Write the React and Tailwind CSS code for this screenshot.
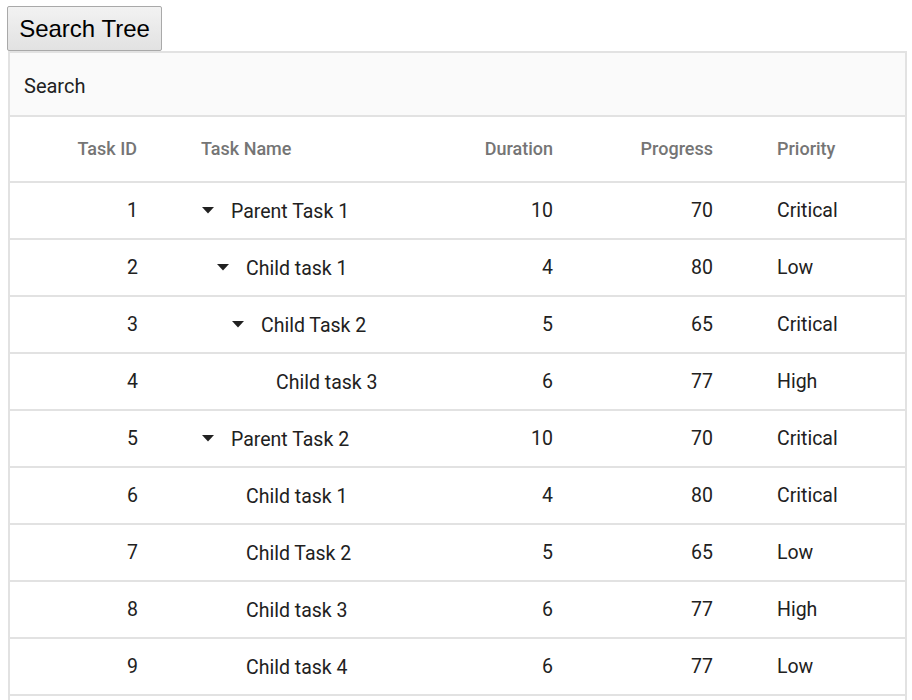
import React from "react";

const rows = [
  { id: 1, name: "Parent Task 1", level: 0, arrow: true, duration: 10, progress: 70, priority: "Critical" },
  { id: 2, name: "Child task 1", level: 1, arrow: true, duration: 4, progress: 80, priority: "Low" },
  { id: 3, name: "Child Task 2", level: 2, arrow: true, duration: 5, progress: 65, priority: "Critical" },
  { id: 4, name: "Child task 3", level: 3, arrow: false, duration: 6, progress: 77, priority: "High" },
  { id: 5, name: "Parent Task 2", level: 0, arrow: true, duration: 10, progress: 70, priority: "Critical" },
  { id: 6, name: "Child task 1", level: 1, arrow: false, duration: 4, progress: 80, priority: "Critical" },
  { id: 7, name: "Child Task 2", level: 1, arrow: false, duration: 5, progress: 65, priority: "Low" },
  { id: 8, name: "Child task 3", level: 1, arrow: false, duration: 6, progress: 77, priority: "High" },
  { id: 9, name: "Child task 4", level: 1, arrow: false, duration: 6, progress: 77, priority: "Low" },
];

const indents = ["w-0", "w-[15px]", "w-[30px]", "w-[45px]"];

function Arrow() {
  return (
    <svg width="12" height="7" viewBox="0 0 12 7" className="mr-[17px] shrink-0">
      <path d="M0 0 L12 0 L6 6.5 Z" fill="#212121" />
    </svg>
  );
}

export default function App() {
  return (
    <div className="bg-white h-[700px] overflow-hidden" style={{ fontFamily: "Roboto, 'Liberation Sans', sans-serif" }}>
      <button
        className="ml-[7px] mt-[6px] h-[45px] w-[155px] border border-[#a9a9a9] rounded-[2px] bg-gradient-to-b from-[#f2f2f2] to-[#e2e2e2] text-[24px] text-black leading-none flex items-center justify-center"
        style={{ fontFamily: "'Liberation Sans', Arial, sans-serif" }}
      >
        Search Tree
      </button>
      <div className="ml-[8px] w-[899px] h-[660px] border-2 border-b-0 border-[#e2e2e2]">
        <div className="h-[64px] bg-[#fafafa] border-b-2 border-[#e2e2e2] flex items-center pt-[3px] pl-[14px] text-[20px] text-[#212121]">
          Search
        </div>
        <div className="h-[66px] border-b-2 border-[#e2e2e2] flex items-center pb-[1px] text-[18px] font-medium text-[#757575]">
          <div className="w-[159px] pr-[32px] text-right">Task ID</div>
          <div className="w-[256px] pl-[32px]">Task Name</div>
          <div className="w-[160px] pr-[32px] text-right">Duration</div>
          <div className="w-[160px] pr-[32px] text-right">Progress</div>
          <div className="flex-1 pl-[32px]">Priority</div>
        </div>
        {rows.map((r) => (
          <div key={r.id} className="h-[57px] border-b-2 border-[#e2e2e2] flex items-center text-[19.5px] text-[#212121]">
            <div className="w-[159px] pr-[31px] text-right">{r.id}</div>
            <div className="w-[256px] pl-[33px] flex items-center">
              <span className={`shrink-0 ${indents[r.level]}`} />
              {r.arrow ? <Arrow /> : <span className="w-[29px] shrink-0" />}
              <span className="pt-[2px]">{r.name}</span>
            </div>
            <div className="w-[160px] pr-[32px] text-right">{r.duration}</div>
            <div className="w-[160px] pr-[32px] text-right">{r.progress}</div>
            <div className="flex-1 pl-[32px]">{r.priority}</div>
          </div>
        ))}
      </div>
    </div>
  );
}
